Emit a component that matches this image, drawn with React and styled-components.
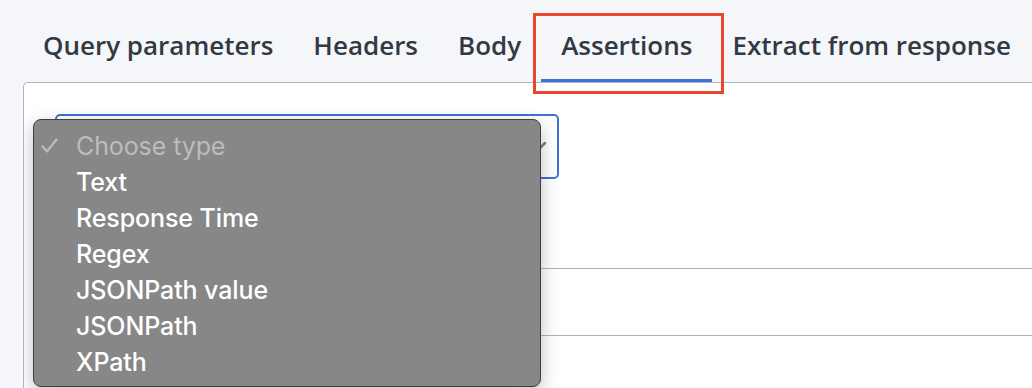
import React from 'react';
import styled, { createGlobalStyle } from 'styled-components';

const GlobalStyle = createGlobalStyle`
  html, body {
    margin: 0;
    padding: 0;
    background: #f4f6fa;
    height: 100%;
    overflow: hidden;
  }
  #root {
    height: 100%;
  }
`;

const Page = styled.div`
  height: 100%;
  display: flex;
  flex-direction: column;
  font-family: "Open Sans", "Liberation Sans", sans-serif;
`;

const TabBar = styled.div`
  position: relative;
  z-index: 2;
  display: flex;
  align-items: flex-end;
  height: 82px;
  padding-left: 23px;
`;

const Tab = styled.div`
  position: relative;
  padding: 12px 20px 17px;
  line-height: 34px;
  font-size: 26px;
  font-weight: 600;
  color: #323943;
  border-bottom: 3px solid ${(p) => (p.$active ? '#3e72d6' : 'transparent')};
  white-space: nowrap;
`;

const Highlight = styled.div`
  position: absolute;
  top: -3px;
  left: -8px;
  right: -12px;
  bottom: -15px;
  border: 3px solid #e9472d;
  pointer-events: none;
`;

const Panel = styled.div`
  position: relative;
  flex: 1;
  margin-left: 23px;
  border: 1px solid #a9b4c6;
  border-right: none;
  border-bottom: none;
  border-top-left-radius: 5px;
  background: #ffffff;
  padding: 31px 0 0 31px;
  overflow: hidden;
`;

const Select = styled.div`
  box-sizing: border-box;
  width: 504px;
  height: 65px;
  border: 2px solid #3e72d6;
  border-radius: 5px;
  display: flex;
  align-items: center;
  justify-content: flex-end;
  padding-right: 10px;
`;

const Field = styled.div`
  margin-top: 89px;
  height: 66px;
  border-top: 1px solid #aab4c4;
  border-bottom: 1px solid #aab4c4;
`;

const Menu = styled.div`
  position: absolute;
  top: 36px;
  left: 9px;
  width: 508px;
  height: 268px;
  box-sizing: border-box;
  background: #878787;
  border: 1px solid #3f3f3f;
  border-radius: 8px;
  box-shadow: 0 6px 18px rgba(0, 0, 0, 0.25);
  padding-top: 8px;
  font-family: Inter, "Liberation Sans", sans-serif;
`;

const Item = styled.div`
  position: relative;
  height: 36px;
  line-height: 36px;
  padding-left: 42px;
  font-size: 25px;
  font-weight: ${(p) => (p.$placeholder ? 400 : 500)};
  color: ${(p) => (p.$placeholder ? '#bcbcbc' : '#ffffff')};
  letter-spacing: -0.1px;
`;

const Check = styled.svg`
  position: absolute;
  left: 7px;
  top: 10px;
`;

const options = ['Text', 'Response Time', 'Regex', 'JSONPath value', 'JSONPath', 'XPath'];
const tabs = ['Query parameters', 'Headers', 'Body', 'Assertions', 'Extract from response'];

const App = () => {
  return (
    <Page>
      <GlobalStyle />
      <TabBar>
        {tabs.map((t) => (
          <Tab key={t} $active={t === 'Assertions'}>
            {t}
            {t === 'Assertions' && <Highlight />}
          </Tab>
        ))}
      </TabBar>
      <Panel>
        <Select>
          <svg width="18" height="12" viewBox="0 0 18 12">
            <path d="M2 2l7 7 7-7" fill="none" stroke="#7b8593" strokeWidth="2.5" strokeLinecap="round" />
          </svg>
        </Select>
        <Field />
        <Menu>
          <Item $placeholder>
            <Check width="17" height="15" viewBox="0 0 17 15">
              <path d="M1.5 8.5l4.5 5L15.5 1.5" fill="none" stroke="#bcbcbc" strokeWidth="2.2" strokeLinecap="round" strokeLinejoin="round" />
            </Check>
            Choose type
          </Item>
          {options.map((o) => (
            <Item key={o}>{o}</Item>
          ))}
        </Menu>
      </Panel>
    </Page>
  );
};

export default App;
